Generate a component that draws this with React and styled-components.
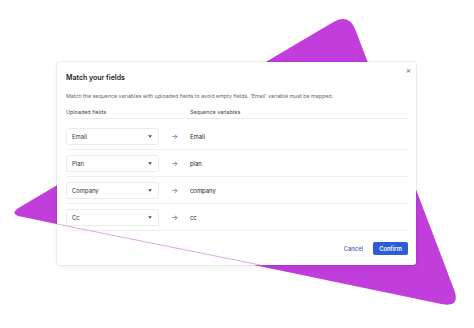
import styled, { createGlobalStyle } from "styled-components";

const GlobalStyle = createGlobalStyle`
  html, body {
    margin: 0;
    padding: 0;
    background: #fff;
  }
  body {
    font-family: Inter, "Noto Sans", sans-serif;
    -webkit-font-smoothing: antialiased;
  }
`;

// triangle corners with how far the rounding starts from each one
const corners = [
  { x: 8, y: 214, d: 14 },
  { x: 349, y: 13, d: 18 },
  { x: 461, y: 308, d: 20 },
];

const roundedPath = (pts) => {
  const n = pts.length;
  const seg = [];
  pts.forEach((p, i) => {
    const prev = pts[(i - 1 + n) % n];
    const next = pts[(i + 1) % n];
    const toward = (q) => {
      const len = Math.hypot(q.x - p.x, q.y - p.y);
      return { x: p.x + ((q.x - p.x) / len) * p.d, y: p.y + ((q.y - p.y) / len) * p.d };
    };
    const a = toward(prev);
    const b = toward(next);
    seg.push(`${i === 0 ? "M" : "L"}${a.x.toFixed(1)},${a.y.toFixed(1)}`);
    seg.push(`Q${p.x},${p.y} ${b.x.toFixed(1)},${b.y.toFixed(1)}`);
  });
  return seg.join(" ") + " Z";
};

const rows = [
  { field: "Email", variable: "Email" },
  { field: "Plan", variable: "plan" },
  { field: "Company", variable: "company" },
  { field: "Cc", variable: "cc" },
];

export default function App() {
  return (
    <>
      <GlobalStyle />
      <Stage>
        <Backdrop viewBox="0 0 474 328" width="474" height="328">
          <path d={roundedPath(corners)} fill="#c13ddc" />
        </Backdrop>
        <Modal>
          <Header>
            <Title>Match your fields</Title>
            <Close>×</Close>
          </Header>
          <Description>
            Match the sequence variables with uploaded fields to avoid empty fields. 'Email' variable must be mapped.
          </Description>
          <Heads>
            <span>Uploaded fields</span>
            <span />
            <span>Sequence variables</span>
          </Heads>
          <List>
            {rows.map((r) => (
              <Row key={r.field}>
                <Select>
                  {r.field}
                  <svg width="4" height="3" viewBox="0 0 4 3">
                    <path d="M0 0.3 L4 0.3 L2 2.7 Z" fill="#555" />
                  </svg>
                </Select>
                <Arrow>→</Arrow>
                <Value>{r.variable}</Value>
              </Row>
            ))}
          </List>
          <Footer>
            <Cancel>Cancel</Cancel>
            <Confirm>Confirm</Confirm>
          </Footer>
        </Modal>
        <Overlay viewBox="0 0 474 328" width="474" height="328">
          <line x1="57" y1="224" x2="262" y2="265.4" stroke="#d690e6" strokeWidth="0.8" />
        </Overlay>
      </Stage>
    </>
  );
}

const Stage = styled.div`
  position: relative;
  width: 474px;
  height: 328px;
  overflow: hidden;
  padding: 62px 0 0 57px;
  box-sizing: border-box;
`;

const Backdrop = styled.svg`
  position: absolute;
  left: 0;
  top: 0;
  z-index: 0;
`;

const Overlay = styled.svg`
  position: absolute;
  left: 0;
  top: 0;
  z-index: 2;
  pointer-events: none;
`;

const Modal = styled.div`
  position: relative;
  z-index: 1;
  width: 359px;
  box-sizing: border-box;
  padding: 12px 8px 10px 9px;
  background: #fff;
  border-radius: 3px;
  box-shadow: 0 0 0 1px rgba(0, 0, 0, 0.05), 0 2px 6px rgba(0, 0, 0, 0.07);
`;

const Header = styled.div`
  display: flex;
  justify-content: space-between;
  align-items: flex-start;
`;

const Title = styled.h2`
  margin: 0;
  font-size: 7px;
  line-height: 8px;
  font-weight: 600;
  color: #1a1a1a;
`;

const Close = styled.button`
  border: none;
  background: none;
  padding: 0;
  margin: -8px -3px 0 0;
  font-family: inherit;
  font-size: 8px;
  line-height: 8px;
  color: #666;
`;

const Description = styled.p`
  margin: 11px 0 0;
  font-size: 5.3px;
  line-height: 7px;
  color: #666;
`;

const Heads = styled.div`
  display: grid;
  grid-template-columns: 93px 31px 1fr;
  margin-top: 9px;
  padding-bottom: 2px;
  border-bottom: 1px solid #ececec;
  font-size: 5.4px;
  line-height: 7px;
  color: #444;
`;

const List = styled.div`
  padding-top: 4px;
`;

const Row = styled.div`
  display: grid;
  grid-template-columns: 93px 31px 1fr;
  align-items: center;
  height: 26px;
  border-bottom: 1px solid #f0f0f0;
`;

const Select = styled.div`
  display: flex;
  align-items: center;
  justify-content: space-between;
  height: 17px;
  box-sizing: border-box;
  padding: 0 6px 0 5px;
  border: 1px solid #ececec;
  border-radius: 3px;
  font-size: 5.9px;
  color: #333;
`;

const Arrow = styled.span`
  text-align: center;
  font-size: 7px;
  color: #555;
`;

const Value = styled.span`
  font-size: 5.9px;
  color: #222;
`;

const Footer = styled.div`
  display: flex;
  justify-content: flex-end;
  align-items: center;
  gap: 10px;
  margin-top: 11px;
`;

const Cancel = styled.button`
  border: none;
  background: none;
  padding: 0;
  font-family: inherit;
  font-size: 5.8px;
  font-weight: 500;
  color: #3d5cc0;
`;

const Confirm = styled.button`
  width: 35px;
  height: 13px;
  padding: 0;
  border: none;
  border-radius: 2px;
  background: #2e5bd8;
  font-family: inherit;
  font-size: 5.8px;
  font-weight: 600;
  color: #fff;
`;
